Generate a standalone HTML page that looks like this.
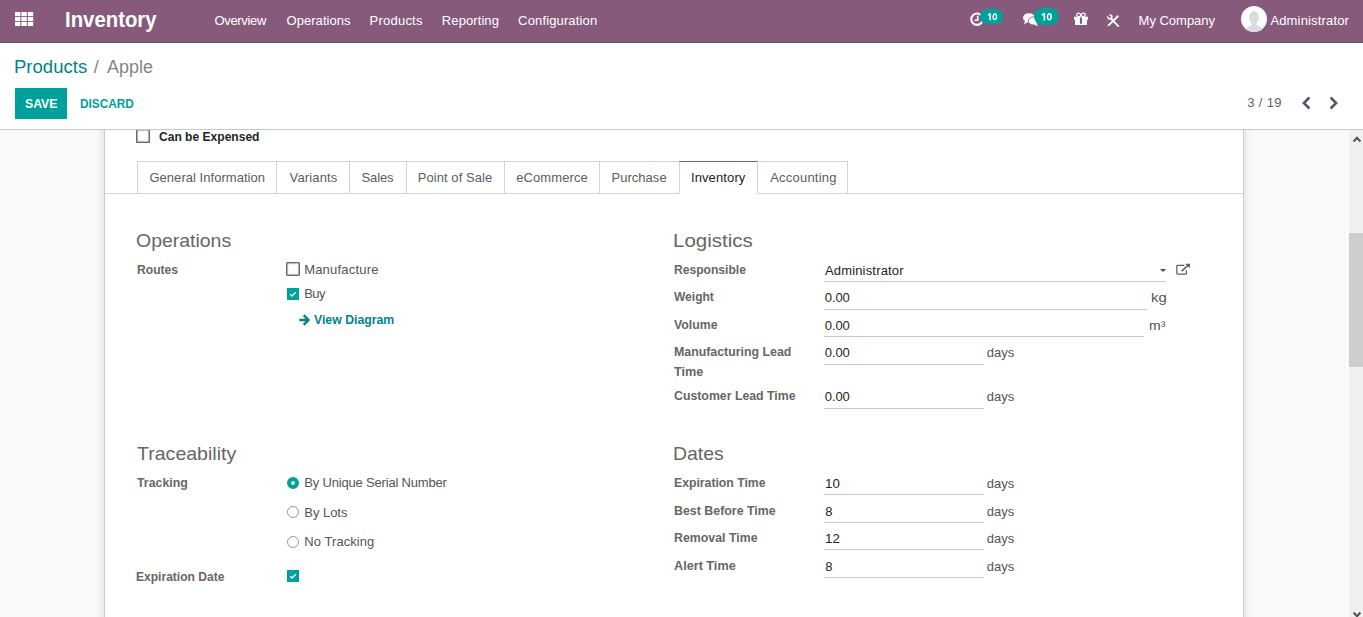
<!DOCTYPE html>
<html><head><meta charset="utf-8"><title>Apple - Odoo</title>
<style>
*{box-sizing:border-box;margin:0;padding:0}
html,body{width:1363px;height:617px;overflow:hidden;background:#fff;font-family:"Liberation Sans",sans-serif;font-size:13px;color:#4c4c4c}
.a,.t{position:absolute}
.t{white-space:nowrap;line-height:1;font-size:13px;color:#555;transform-origin:0 0}
#nav{left:0;top:0;width:1363px;height:43px;background:#875a7b;border-bottom:1px solid #6b4862}
#cp{left:0;top:43px;width:1363px;height:87px;background:#fff;border-bottom:1px solid #c9c9c9}
#content{left:0;top:130px;width:1348px;height:487px;background:#f9f9f9;overflow:hidden}
#sheet{left:104px;top:-10px;width:1140px;height:520px;background:#fff;border:1px solid #c9ccd5;box-shadow:0 0 9px rgba(0,0,0,.13)}
#sb{left:1348px;top:130px;width:15px;height:487px;background:#f0f0f0;border-left:1px solid #fbfbfb}
#sb .thumb{left:0;top:103px;width:14px;height:134px;background:#cdcdcd}
.ul{position:absolute;height:1px;background:#c9c9c9}
.cb{position:absolute;width:14px;height:14px;border:1px solid #6a6a6a;background:#fff;border-radius:1px;box-shadow:inset 0 0 0 .6px #8c8c8c,inset 0 0 0 1.6px #ececec}
.cbc{position:absolute;width:12px;height:12px;background:#00a09d}
.rd{position:absolute;width:12px;height:12px;border:1px solid #999;border-radius:50%;background:#fff}
.tab{position:absolute;top:161px;height:33px;border:1px solid #ced4da;border-left:none;background:#fff}
.bdg{position:absolute;height:15px;border-radius:8px;background:#00a09d;color:#fff;font-weight:bold;font-size:10px;line-height:15px;text-align:center}
</style></head><body>
<div class="a" id="nav">
 <svg class="a" style="left:15px;top:12px" width="19" height="14" viewBox="0 0 19 14"><g fill="#fff"><rect x="0" y="0" width="5.4" height="4.1"/><rect x="6.4" y="0" width="5.4" height="4.1"/><rect x="12.8" y="0" width="5.4" height="4.1"/><rect x="0" y="4.95" width="5.4" height="4.1"/><rect x="6.4" y="4.95" width="5.4" height="4.1"/><rect x="12.8" y="4.95" width="5.4" height="4.1"/><rect x="0" y="9.9" width="5.4" height="4.1"/><rect x="6.4" y="9.9" width="5.4" height="4.1"/><rect x="12.8" y="9.9" width="5.4" height="4.1"/></g></svg>
 <!-- clock -->
 <svg class="a" style="left:970px;top:12px" width="15" height="15" viewBox="0 0 15 15"><circle cx="7" cy="7.2" r="5.7" fill="none" stroke="#fff" stroke-width="2.1"/><path d="M7.7 3.8 V8.3 H4.6" fill="none" stroke="#fff" stroke-width="1.6"/></svg>
 <svg class="a" style="left:980px;top:8.9px" width="23.2" height="15.4" viewBox="0 0 23.2 15.4"><rect width="23.2" height="15.4" rx="7.7" fill="#00a09d"/><g transform="translate(7.3 4.3) scale(0.99)" fill="#fff"><path d="M2.1 0 H3.6 V7 H2.1 V1.8 L0.4 2.8 V1.45 Z"/><ellipse cx="7.55" cy="3.5" rx="1.72" ry="2.85" fill="none" stroke="#fff" stroke-width="1.4"/></g></svg>
 <!-- chat -->
 <svg class="a" style="left:1023px;top:13px" width="17" height="14" viewBox="0 0 17 14"><ellipse cx="6" cy="4.8" rx="6" ry="4.6" fill="#fff"/><path d="M2 8 L1 11.2 L5 9 Z" fill="#fff"/><ellipse cx="10.6" cy="8" rx="5.4" ry="4" fill="#fff" stroke="#875a7b" stroke-width="0.9"/><path d="M13.2 10.8 L15.6 13.3 L11 11.8 Z" fill="#fff"/></svg>
 <svg class="a" style="left:1034.3px;top:7.8px" width="25" height="17.2" viewBox="0 0 25 17.2"><rect width="25" height="17.2" rx="8.6" fill="#00a09d"/><g transform="translate(7.3 5) scale(1.06)" fill="#fff"><path d="M2.1 0 H3.6 V7 H2.1 V1.8 L0.4 2.8 V1.45 Z"/><ellipse cx="7.55" cy="3.5" rx="1.72" ry="2.85" fill="none" stroke="#fff" stroke-width="1.4"/></g></svg>
 <!-- gift -->
 <svg class="a" style="left:1074px;top:12px" width="15" height="14" viewBox="0 0 15 14"><path d="M0 4.8 H14 V7.7 H13 V13 H1 V7.7 H0 Z" fill="#fff"/><rect x="5.9" y="5.5" width="2.1" height="6.3" fill="#875a7b"/><ellipse cx="4.7" cy="2.9" rx="2" ry="1.7" fill="none" stroke="#fff" stroke-width="1.2"/><ellipse cx="9.3" cy="2.9" rx="2" ry="1.7" fill="none" stroke="#fff" stroke-width="1.2"/></svg>
 <!-- tools -->
 <svg class="a" style="left:1106px;top:13px" width="14" height="15" viewBox="0 0 14 15"><path d="M1.2 13.6 L2.4 11.2 L11.6 2 L13 3.4 L3.8 12.6 Z" fill="#fff"/><path d="M5.2 5.8 L12.3 13.1" stroke="#fff" stroke-width="1.9" stroke-linecap="round"/><circle cx="3.9" cy="4.1" r="1.9" fill="none" stroke="#fff" stroke-width="1.7"/><path d="M3.7 3.9 L1.2 0.8" stroke="#875a7b" stroke-width="2"/></svg>
 <!-- avatar -->
 <svg class="a" style="left:1241px;top:6px" width="26" height="26" viewBox="0 0 26 26"><defs><clipPath id="av"><circle cx="13" cy="13" r="13"/></clipPath></defs><circle cx="13" cy="13" r="13" fill="#fcfcfc"/><g clip-path="url(#av)" fill="#dbdbdb"><ellipse cx="13" cy="11.4" rx="4.9" ry="6.3"/><rect x="10.4" y="15" width="5.2" height="5.4"/><path d="M4 27 C4 21.2 8 20.4 10.6 19.4 L15.4 19.4 C18 20.4 22 21.2 22 27 Z"/></g></svg>
</div>
<div class="a" id="cp">
 <div class="a" style="left:15px;top:45px;width:52px;height:31px;background:#00a09d"></div>
 <svg class="a" style="left:1301px;top:53px" width="11" height="14" viewBox="0 0 11 14"><path d="M8.4 1.5 L2.9 7 L8.4 12.5" fill="none" stroke="#55566e" stroke-width="2.6"/></svg>
 <svg class="a" style="left:1328.4px;top:53px" width="11" height="14" viewBox="0 0 11 14"><path d="M2.6 1.5 L8.1 7 L2.6 12.5" fill="none" stroke="#55566e" stroke-width="2.6"/></svg>
</div>
<div class="a" id="content"><div class="a" id="sheet"></div></div>
<div class="a" id="sb"><div class="a thumb"></div>
 <svg class="a" style="left:3px;top:5px" width="10" height="8" viewBox="0 0 10 8"><path d="M1.6 6.5 L5 2.8 L8.4 6.5" fill="none" stroke="#505050" stroke-width="2"/></svg>
 <svg class="a" style="left:3px;top:481px" width="10" height="8" viewBox="0 0 10 8"><path d="M1.6 1.5 L5 5.2 L8.4 1.5" fill="none" stroke="#505050" stroke-width="2"/></svg>
</div>
<div id="form">
 <div class="cb" style="left:136px;top:130px;height:13px;border-top:none;border-radius:0 0 1px 1px"></div>
 <div class="ul" style="left:105px;top:193px;width:1138px;background:#ced4da"></div>
 <div class="tab" style="left:137px;width:140px;border-left:1px solid #ced4da"></div>
 <div class="tab" style="left:277px;width:73px"></div>
 <div class="tab" style="left:350px;width:57px"></div>
 <div class="tab" style="left:407px;width:98px"></div>
 <div class="tab" style="left:505px;width:95px"></div>
 <div class="tab" style="left:600px;width:80px"></div>
 <div class="tab" style="left:679px;width:79px;border-left:1px solid #ced4da;border-top-color:#875a7b;border-bottom-color:#fff"></div>
 <div class="tab" style="left:758px;width:90px"></div>

 <div class="cb" style="left:286px;top:262px"></div>
 <div class="cbc" style="left:287px;top:288px"><svg width="12" height="12" viewBox="0 0 12 12" style="display:block"><path d="M3.2 6.2 L5 8 L8.8 4.2" fill="none" stroke="#fff" stroke-width="1.35"/></svg></div>
 <svg class="a" style="left:299px;top:313.6px" width="12" height="12" viewBox="0 0 12 12"><path d="M0.4 6 H8.8 M4.7 1.2 L9.5 6 L4.7 10.8" fill="none" stroke="#008489" stroke-width="2.4"/></svg>

 <div class="ul" style="left:824px;top:281px;width:342px"></div>
 <div class="a" style="left:1160px;top:269px;width:0;height:0;border-left:3px solid transparent;border-right:3px solid transparent;border-top:3px solid #4c4c4c"></div>
 <svg class="a" style="left:1176px;top:263px" width="15" height="13" viewBox="0 0 15 13"><path d="M10.4 7.2 V10.2 Q10.4 11.2 9.4 11.2 H1.8 Q0.8 11.2 0.8 10.2 V3.4 Q0.8 2.4 1.8 2.4 H8.4" fill="none" stroke="#565b7b" stroke-width="1.2"/><path d="M5.7 8.2 L12.4 2" stroke="#565b7b" stroke-width="1.6"/><path d="M9.2 0.7 H13.9 V5.2 Z" fill="#565b7b"/></svg>
 <div class="ul" style="left:824px;top:309px;width:323px"></div>
 <div class="ul" style="left:824px;top:336px;width:320px"></div>
 <div class="ul" style="left:824px;top:364px;width:160px"></div>
 <div class="ul" style="left:824px;top:408px;width:160px"></div>

 <div class="rd" style="left:287px;top:477px;border:4.2px solid #00a09d;background:#f0f0f0"></div>
 <div class="rd" style="left:287px;top:506px"></div>
 <div class="rd" style="left:287px;top:536px"></div>
 <div class="cbc" style="left:287px;top:570px"><svg width="12" height="12" viewBox="0 0 12 12" style="display:block"><path d="M3.2 6.2 L5 8 L8.8 4.2" fill="none" stroke="#fff" stroke-width="1.35"/></svg></div>

 <div class="ul" style="left:824px;top:494px;width:160px"></div>
 <div class="ul" style="left:824px;top:522px;width:160px"></div>
 <div class="ul" style="left:824px;top:549px;width:160px"></div>
 <div class="ul" style="left:824px;top:577px;width:160px"></div>
<div class="t" id="brand" style="left:65.4px;top:9px;font-size:22px;font-weight:bold;color:#fff;transform:scaleX(0.925)">Inventory</div>
<div class="t" id="m1" style="left:214.53px;top:14px;color:#fff;letter-spacing:-0.34px">Overview</div>
<div class="t" id="m2" style="left:286.57px;top:14px;color:#fff;letter-spacing:0.04px">Operations</div>
<div class="t" id="m3" style="left:369.61px;top:14px;color:#fff;letter-spacing:0.22px">Products</div>
<div class="t" id="m4" style="left:441.83px;top:14px;color:#fff;letter-spacing:0.09px">Reporting</div>
<div class="t" id="m5" style="left:518.12px;top:14px;color:#fff;letter-spacing:0.14px">Configuration</div>
<div class="t" id="co" style="left:1138.62px;top:14px;color:#fff;letter-spacing:-0.02px">My Company</div>
<div class="t" id="adm" style="left:1270.39px;top:14px;color:#fff;letter-spacing:0.16px">Administrator</div>
<div class="t" id="bc1" style="left:14.15px;top:58px;font-size:18px;color:#008489;transform:scaleX(1.03)">Products</div>
<div class="t" id="bc2" style="left:93.69px;top:58px;font-size:18px;color:#80868b">/</div>
<div class="t" id="bc3" style="left:106.92px;top:58px;font-size:18px;color:#80868b;transform:scaleX(0.997)">Apple</div>
<div class="t" id="save" style="left:24.76px;top:97px;font-weight:bold;color:#fff;transform:scaleX(0.941)">SAVE</div>
<div class="t" id="disc" style="left:79.72px;top:97px;font-weight:bold;color:#00a09d;transform:scaleX(0.909)">DISCARD</div>
<div class="t" id="pager" style="left:1247.25px;top:96px;color:#5f5f5f;letter-spacing:0.33px">3 / 19</div>
<div class="t" id="cbe" style="left:159.42px;top:130px;font-weight:bold;color:#212529;transform:scaleX(0.927)">Can be Expensed</div>
<div class="t" id="tab0" style="left:149.43px;top:171px;color:#5c5c5c;letter-spacing:0.04px">General Information</div>
<div class="t" id="tab1" style="left:289.57px;top:171px;color:#5c5c5c;letter-spacing:0.14px">Variants</div>
<div class="t" id="tab2" style="left:361.54px;top:171px;color:#5c5c5c;letter-spacing:-0.12px">Sales</div>
<div class="t" id="tab3" style="left:417.75px;top:171px;color:#5c5c5c;letter-spacing:0.06px">Point of Sale</div>
<div class="t" id="tab4" style="left:516.2px;top:171px;color:#5c5c5c;letter-spacing:0.09px">eCommerce</div>
<div class="t" id="tab5" style="left:611.49px;top:171px;color:#5c5c5c;letter-spacing:0.03px">Purchase</div>
<div class="t" id="tab6" style="left:690.91px;top:171px;color:#212529;letter-spacing:0.12px">Inventory</div>
<div class="t" id="tab7" style="left:770.13px;top:171px;color:#5c5c5c;letter-spacing:0.23px">Accounting</div>
<div class="t" id="h_op" style="left:136.47px;top:231px;font-size:19px;color:#666;transform:scaleX(1.024)">Operations</div>
<div class="t" id="routes" style="left:136.53px;top:263px;font-weight:bold;color:#666;transform:scaleX(0.931)">Routes</div>
<div class="t" id="manu" style="left:304.13px;top:263px;letter-spacing:0.2px">Manufacture</div>
<div class="t" id="buy" style="left:304.15px;top:287px;letter-spacing:-0.46px">Buy</div>
<div class="t" id="vd" style="left:313.64px;top:313px;font-weight:bold;color:#008489;transform:scaleX(0.944)">View Diagram</div>
<div class="t" id="h_lo" style="left:673px;top:231px;font-size:19px;color:#666;transform:scaleX(1.078)">Logistics</div>
<div class="t" id="resp" style="left:673.66px;top:263px;font-weight:bold;color:#666;transform:scaleX(0.93)">Responsible</div>
<div class="t" id="v_adm" style="left:824.93px;top:264px;color:#212529;letter-spacing:0.17px">Administrator</div>
<div class="t" id="weight" style="left:674.29px;top:290px;font-weight:bold;color:#666;transform:scaleX(0.924)">Weight</div>
<div class="t" id="v_w" style="left:824.74px;top:291px;color:#212529;letter-spacing:-0.07px">0.00</div>
<div class="t" id="kg" style="left:1150.6px;top:291px;transform:scaleX(1.146)">kg</div>
<div class="t" id="volume" style="left:674.28px;top:318px;font-weight:bold;color:#666;transform:scaleX(0.948)">Volume</div>
<div class="t" id="v_v" style="left:824.74px;top:319px;color:#212529;letter-spacing:-0.07px">0.00</div>
<div class="t" id="m3u" style="left:1148.8px;top:319px;transform:scaleX(1.084)">m³</div>
<div class="t" id="mfg1" style="left:673.67px;top:345px;font-weight:bold;color:#666;transform:scaleX(0.95)">Manufacturing Lead</div>
<div class="t" id="mfg2" style="left:674.38px;top:365px;font-weight:bold;color:#666;transform:scaleX(0.974)">Time</div>
<div class="t" id="v_m" style="left:824.74px;top:346px;color:#212529;letter-spacing:-0.07px">0.00</div>
<div class="t" id="d1" style="left:986.77px;top:346px;letter-spacing:0.04px">days</div>
<div class="t" id="cust" style="left:674.44px;top:389px;font-weight:bold;color:#666;transform:scaleX(0.947)">Customer Lead Time</div>
<div class="t" id="v_c" style="left:824.74px;top:390px;color:#212529;letter-spacing:-0.07px">0.00</div>
<div class="t" id="d2" style="left:986.77px;top:390px;letter-spacing:0.04px">days</div>
<div class="t" id="h_tr" style="left:137.08px;top:444px;font-size:19px;color:#666;transform:scaleX(1.029)">Traceability</div>
<div class="t" id="track" style="left:137.38px;top:476px;font-weight:bold;color:#666;transform:scaleX(0.95)">Tracking</div>
<div class="t" id="r1" style="left:304.35px;top:476px;letter-spacing:-0.19px">By Unique Serial Number</div>
<div class="t" id="r2" style="left:304.31px;top:506px;letter-spacing:-0.04px">By Lots</div>
<div class="t" id="r3" style="left:304.31px;top:535px;letter-spacing:0.06px">No Tracking</div>
<div class="t" id="expd" style="left:136.45px;top:570px;font-weight:bold;color:#666;transform:scaleX(0.927)">Expiration Date</div>
<div class="t" id="h_da" style="left:672.67px;top:444px;font-size:19px;color:#666;transform:scaleX(1.024)">Dates</div>
<div class="t" id="et" style="left:673.72px;top:476px;font-weight:bold;color:#666;transform:scaleX(0.941)">Expiration Time</div>
<div class="t" id="v_e" style="left:825.01px;top:477px;color:#212529;transform:scaleX(1.022)">10</div>
<div class="t" id="d3" style="left:986.77px;top:477px;letter-spacing:0.04px">days</div>
<div class="t" id="bb" style="left:673.67px;top:504px;font-weight:bold;color:#666;transform:scaleX(0.953)">Best Before Time</div>
<div class="t" id="v_b" style="left:825.32px;top:505px;color:#212529">8</div>
<div class="t" id="d4" style="left:986.77px;top:505px;letter-spacing:0.04px">days</div>
<div class="t" id="rt" style="left:673.68px;top:531px;font-weight:bold;color:#666;transform:scaleX(0.95)">Removal Time</div>
<div class="t" id="v_r" style="left:825px;top:532px;color:#212529;transform:scaleX(1.028)">12</div>
<div class="t" id="d5" style="left:986.77px;top:532px;letter-spacing:0.04px">days</div>
<div class="t" id="at" style="left:674.13px;top:559px;font-weight:bold;color:#666;transform:scaleX(0.974)">Alert Time</div>
<div class="t" id="v_a" style="left:825.32px;top:560px;color:#212529">8</div>
<div class="t" id="d6" style="left:986.77px;top:560px;letter-spacing:0.04px">days</div>
</div>
</body></html>
